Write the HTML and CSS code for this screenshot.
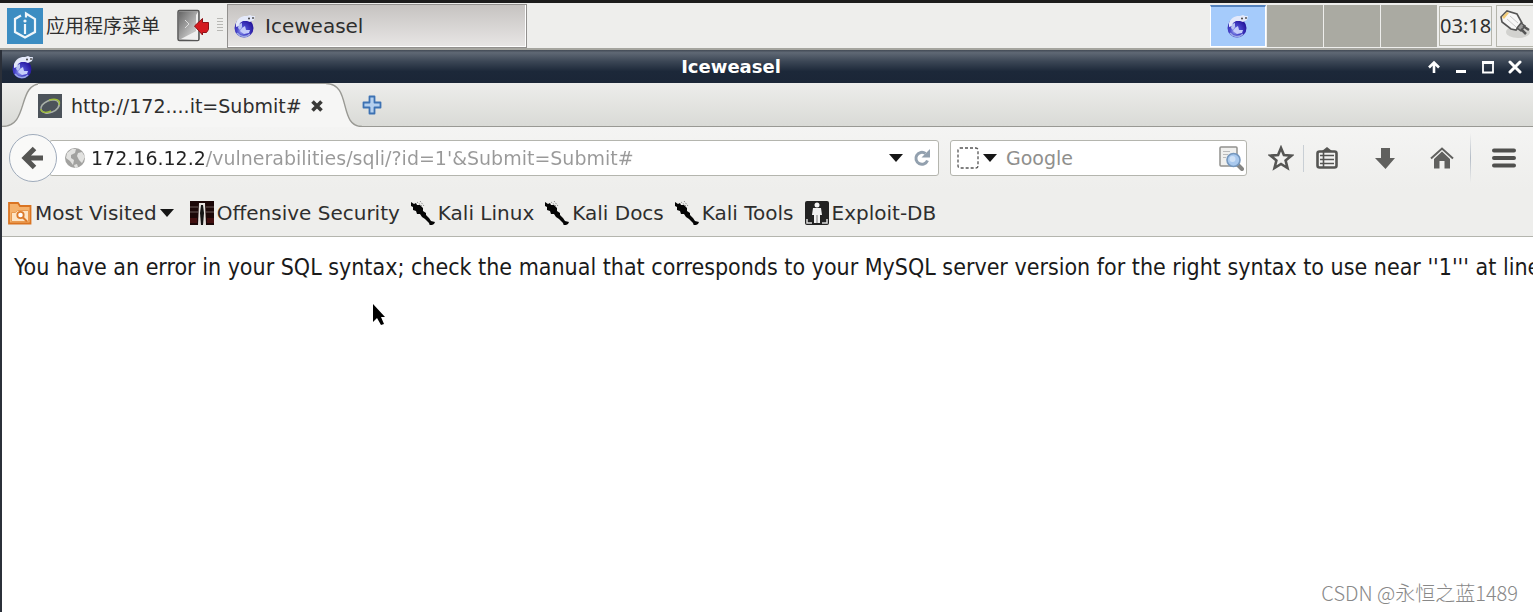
FILE: index.html
```
<!DOCTYPE html>
<html lang="en">
<head>
  <meta charset="UTF-8" />
  <meta name="viewport" content="width=device-width, initial-scale=1.0"/>
  <title>Iceweasel</title>
  <link rel="stylesheet" href="styles.css">
</head>
<body>
  <!-- shared icons -->
  <svg class="defs" width="0" height="0" aria-hidden="true">
    <defs>
      <radialGradient id="globeFill" cx="0.4" cy="0.65" r="0.65">
        <stop offset="0" stop-color="#a9b4f4"/>
        <stop offset="0.4" stop-color="#4a48cc"/>
        <stop offset="1" stop-color="#23129a"/>
      </radialGradient>
      <linearGradient id="doorFill" x1="0" y1="0" x2="1" y2="1">
        <stop offset="0" stop-color="#666"/>
        <stop offset="1" stop-color="#e8e8e8"/>
      </linearGradient>
    </defs>
    <symbol id="weasel" viewBox="0 0 24 24">
      <circle cx="11" cy="14" r="9.500" fill="url(#globeFill)"/>
      <path d="M3 9C5 4 9 1.500 14 2l3-1 2 1 3 0-1 4-4 2-3-1-4 0-3 2-1 3-3 1z" fill="#e4e9fa"/>
      <path d="M6 10l3-1 0 4-2 3-2-2z" fill="#b9c4f2"/>
      <path d="M9 14l3-2 1 4 4 0-1 3-5 1-4-3z" fill="#c5cdfa"/>
      <circle cx="16" cy="4.500" r="1" fill="#444"/>
      <circle cx="20" cy="4" r="1" fill="#555"/>
      <path d="M4 19c3 4 9 5 13 1" fill="none" stroke="#9ba8e4" stroke-width="1.500"/>
    </symbol>
    <symbol id="kali" viewBox="0 0 24 24">
      <path d="M0 1l3 2 2-1 1 2 3 0 3 3 0 3 3 2 0 2 3 3 2 3 4 1-1 2-4 2-1-3-4-4-3-2-2-3-3 0-1-3-3-1 0-3-2-1z" fill="#050505"/>
      <path d="M6 1l5 4M9 0l4 5" stroke="#777" stroke-width="0.800" stroke-dasharray="1.500 1" fill="none"/>
    </symbol>
  </svg>

  <header class="panel">
    <button class="app-menu">
      <svg width="36" height="36" viewBox="0 0 36 36" aria-hidden="true">
        <rect width="36" height="36" fill="#3c8dc2"/>
        <path d="M14 7.500L8 11v13l10 5.500L28 24V11l-9-5.500v4M18 16v10" fill="none" stroke="#f0f6fa" stroke-width="2.200"/>
        <circle cx="18" cy="13" r="1.600" fill="#f0f6fa"/>
      </svg>
      <span>应用程序菜单</span>
    </button>
    <button class="logout" aria-label="Log out">
      <svg width="34" height="34" viewBox="0 0 34 34">
        <rect x="1" y="1.500" width="21" height="30" rx="1.500" fill="#bdbdbd" stroke="#565656" stroke-width="1.500"/>
        <path d="M2 2.500h19l0 17-17 11-2-1z" fill="url(#doorFill)"/>
        <path d="M4 30L19 22V6l2-3v28z" fill="#eee"/>
        <path d="M8 11l4 4-4 4" fill="none" stroke="#ddd"/>
        <path d="M17.500 17l8-7.500v4h6v7l-2 3h-4v2.500z" fill="#d41a1f" stroke="#8f1115"/>
      </svg>
    </button>
    <span class="grip"></span>
    <button class="task"><svg width="24" height="24" aria-hidden="true"><use href="#weasel"/></svg>Iceweasel</button>
    <div class="workspaces">
      <button class="ws active" aria-label="Workspace 1"><svg width="24" height="24"><use href="#weasel"/></svg></button>
      <button class="ws" aria-label="Workspace 2"></button>
      <button class="ws" aria-label="Workspace 3"></button>
      <button class="ws" aria-label="Workspace 4"></button>
    </div>
    <time class="clock">03:18</time>
    <button class="tray" aria-label="Network">
      <svg width="32" height="36" viewBox="0 0 32 36">
        <ellipse cx="19" cy="24" rx="12" ry="6" fill="#d2d2cf"/>
        <path d="M2 9L8 3l10 3 5 9-6 7-5-1L3 14z" fill="#f7f7f7" stroke="#555" stroke-width="1.600"/>
        <path d="M3 9l5-5 2 1-5 6z" fill="#f4cd77"/>
        <path d="M8 11l9 8M11 8l8 7" stroke="#c8c8c8"/>
        <path d="M18 20l4-5 4 3-4 5z" fill="#999" stroke="#555" stroke-width="1.500"/>
        <path d="M24 18l6 4M22 21l5 5" stroke="#555" stroke-width="2.500"/>
      </svg>
    </button>
  </header>

  <div class="window">
    <div class="titlebar">
      <svg width="24" height="24" aria-hidden="true"><use href="#weasel"/></svg>
      <h1>Iceweasel</h1>
      <div class="window-buttons">
        <button aria-label="Shade"><svg width="14" height="14" viewBox="0 0 14 14"><path d="M7 13V3M2 7.500L7 2.500l5 5" fill="none" stroke="#fff" stroke-width="2.600"/></svg></button>
        <button aria-label="Minimize"><svg width="14" height="14" viewBox="0 0 14 14"><path d="M2 11.500h10" stroke="#fff" stroke-width="3"/></svg></button>
        <button aria-label="Maximize"><svg width="14" height="14" viewBox="0 0 14 14"><path d="M1 2.500h12" stroke="#fff" stroke-width="3"/><path d="M2 2v10.500h10V2" fill="none" stroke="#fff" stroke-width="1.800"/></svg></button>
        <button aria-label="Close"><svg width="14" height="14" viewBox="0 0 14 14"><path d="M2 2l10 10M12 2L2 12" stroke="#fff" stroke-width="3" stroke-linecap="round"/></svg></button>
      </div>
    </div>

    <div class="tabs">
      <svg width="40" height="44" viewBox="0 0 40 44" aria-hidden="true">
        <path d="M0 44V43.500C28 43.500 14 0.500 40 0.500V44z" fill="#f6f6f5"/>
        <path d="M0 43.500C28 43.500 14 0.500 40 0.500" fill="none" stroke="#999994" stroke-width="1.400"/>
      </svg>
      <div class="tab">
        <svg width="24" height="24" viewBox="0 0 24 24" aria-hidden="true">
          <rect width="24" height="24" fill="#4c535a"/>
          <ellipse cx="12" cy="12.500" rx="9.500" ry="6" transform="rotate(-22 12 12.500)" fill="none" stroke="#a9b0a8" stroke-width="1.600"/>
          <path d="M11 6c7-2 12 0 10 5M3 15c0 4 6 4 10 2" fill="none" stroke="#a0bd3c" stroke-width="1.400"/>
        </svg>
        <span class="tab-title">http://172....it=Submit#</span>
        <button aria-label="Close tab"><svg width="14" height="14" viewBox="0 0 14 14"><path d="M2.500 2.500l9 9M11.500 2.500l-9 9" stroke="#3a3a38" stroke-width="3.600"/></svg></button>
      </div>
      <svg width="36" height="44" viewBox="0 0 36 44" aria-hidden="true">
        <path d="M36 44V43.500C12 43.500 26 0.500 0 0.500V44z" fill="#f6f6f5"/>
        <path d="M36 43.500C12 43.500 26 0.500 0 0.500" fill="none" stroke="#999994" stroke-width="1.400"/>
      </svg>
      <div class="tab-rest">
        <button aria-label="New tab"><svg width="20" height="20" viewBox="0 0 20 20"><path d="M7.500 1.500h5v6h6v5h-6v6h-5v-6h-6v-5h6z" fill="#b5d0ee" stroke="#3d72b3" stroke-width="1.800" stroke-linejoin="round"/></svg></button>
      </div>
    </div>

    <form class="nav">
      <button type="button" class="back" aria-label="Back">
        <svg width="24" height="24" viewBox="0 0 24 24"><path d="M22 12H5M13.500 2.500L4 12l9.500 9.500" fill="none" stroke="#555553" stroke-width="5"/></svg>
      </button>
      <div class="urlbar">
        <svg width="22" height="22" viewBox="0 0 22 22" aria-hidden="true">
          <circle cx="11" cy="11" r="10" fill="#a2a2a0"/>
          <path d="M3 6l5-4 4 0-1 4-4 2 0 3 3 2-1 5-3-4-4-3zM14 6l4-1 3 5-3 6-3-3-2-4zM10 18l3-1 1 3-3 1z" fill="#e2e2e0"/>
        </svg>
        <input type="text" aria-label="Address" value="172.16.12.2/vulnerabilities/sqli/?id=1'&amp;Submit=Submit#">
        <button type="button" aria-label="History"><svg width="14" height="8" viewBox="0 0 14 8"><path d="M0 0h14L7 8z" fill="#161616"/></svg></button>
        <button type="button" aria-label="Reload"><svg width="18" height="18" viewBox="0 0 18 18"><path d="M14.500 11.500A6 6 0 1 1 12.500 4.500" fill="none" stroke="#92a0ae" stroke-width="3"/><path d="M17 0v8.500H8.500z" fill="#92a0ae"/></svg></button>
      </div>
      <div class="search">
        <button type="button" class="engine" aria-label="Search engine">
          <svg width="22" height="22" viewBox="0 0 22 22"><rect x="1" y="1" width="20" height="20" rx="2" fill="#fff" stroke="#555" stroke-width="1.300" stroke-dasharray="3 2"/></svg>
          <svg width="14" height="8" viewBox="0 0 14 8"><path d="M0 0h14L7 8z" fill="#161616"/></svg>
        </button>
        <input type="text" aria-label="Search" placeholder="Google">
        <button type="button" aria-label="Go">
          <svg width="26" height="26" viewBox="0 0 26 26">
            <rect x="2" y="2" width="17" height="19" rx="1" fill="#f0f0ee" stroke="#91918e" stroke-width="1.500"/>
            <path d="M5 6.500h7M5 9.500h5M5 12.500h3" stroke="#bbb"/>
            <path d="M20 20l4 4" stroke="#858583" stroke-width="4" stroke-linecap="round"/>
            <circle cx="15.500" cy="15" r="6.500" fill="#a9c9ee" stroke="#7597bd" stroke-width="1.600"/>
            <circle cx="14.500" cy="14" r="3" fill="#cfe1f6"/>
          </svg>
        </button>
      </div>
      <button type="button" class="star" aria-label="Bookmark this page"><svg width="26" height="26" viewBox="0 0 26 26"><path d="M13 3l2.900 7.100 7.600.5-5.900 4.900 1.900 7.500L13 19l-6.500 4 1.900-7.500L2.500 10.600l7.600-.5z" fill="none" stroke="#555553" stroke-width="2.600"/></svg></button>
      <span class="sep short"></span>
      <button type="button" class="tool list" aria-label="Bookmarks"><svg width="24" height="24" viewBox="0 0 24 24"><path d="M7 5l5-4 5 4z" fill="#555553"/><rect x="2.500" y="5.500" width="19" height="16" rx="2" fill="#f3f3f2" stroke="#555553" stroke-width="2.600"/><path d="M5 9.500h14M5 13.500h14M5 17.500h14" stroke="#555553" stroke-width="1.600"/><path d="M8.500 6v15" stroke="#555553" stroke-width="1.600"/></svg></button>
      <button type="button" class="tool" aria-label="Downloads"><svg width="24" height="24" viewBox="0 0 24 24"><path d="M8 2h9v10h5L12.500 23 2 12h6z" fill="#60605e"/></svg></button>
      <button type="button" class="tool" aria-label="Home"><svg width="24" height="24" viewBox="0 0 24 24"><path d="M1 12.500L12 2.500l11 10" fill="none" stroke="#60605e" stroke-width="2"/><path d="M4 13l8-7.500 8 7.500v9.500h-5.500V15h-5v7.500H4z" fill="#60605e"/></svg></button>
      <span class="sep"></span>
      <button type="button" class="menu" aria-label="Menu"><svg width="24" height="20" viewBox="0 0 24 20"><path d="M2 2.500h20M2 10h20M2 17.500h20" stroke="#50504e" stroke-width="4" stroke-linecap="round"/></svg></button>
    </form>

    <nav class="bookmarks">
      <a href="#" class="most">
        <svg width="24" height="24" viewBox="0 0 24 24" aria-hidden="true">
          <path d="M1 22.500V2h9l2 3h10.500v17.500z" fill="#f5b26c" stroke="#da7422" stroke-width="1.800"/>
          <path d="M3.500 20.500v-9h4l2-2h11v11z" fill="#fde4c4" stroke="#e99a50"/>
          <circle cx="12.500" cy="14" r="3.200" fill="#fff" stroke="#dc7b2c" stroke-width="1.800"/>
          <path d="M15 16.500l4 4" stroke="#dc7b2c" stroke-width="2"/>
        </svg>
        Most Visited
        <svg width="14" height="8" viewBox="0 0 14 8" aria-hidden="true"><path d="M0 0h14L7 8z" fill="#161616"/></svg>
      </a>
      <a href="#">
        <svg width="24" height="24" viewBox="0 0 24 24" aria-hidden="true">
          <rect width="24" height="24" fill="#1c0808"/>
          <path d="M0 6h8M0 11h8M16 6h8M16 11h8" stroke="#6a5a58"/>
          <path d="M0 17h7v5H0zM17 17h7v5h-7z" fill="#431010"/>
          <path d="M9 2h6l1 22H8z" fill="#e6e2df"/>
          <path d="M11 4h2l1 8-1 12h-2l-1-12z" fill="#151515"/>
        </svg>
        Offensive Security
      </a>
      <a href="#"><svg width="24" height="24" aria-hidden="true"><use href="#kali"/></svg>Kali Linux</a>
      <a href="#"><svg width="24" height="24" aria-hidden="true"><use href="#kali"/></svg>Kali Docs</a>
      <a href="#"><svg width="24" height="24" aria-hidden="true"><use href="#kali"/></svg>Kali Tools</a>
      <a href="#">
        <svg width="24" height="24" viewBox="0 0 24 24" aria-hidden="true">
          <rect width="24" height="24" rx="2" fill="#222"/>
          <circle cx="12" cy="4" r="2.500" fill="#f5f5f5"/>
          <path d="M8 7h8l1 7h-2v8H9v-8H7z" fill="#f0f0f0"/>
          <path d="M12 14v8" stroke="#777"/>
          <path d="M2 18v4h5M22 18v4h-5" fill="none" stroke="#ddd" stroke-width="1.500"/>
        </svg>
        Exploit-DB
      </a>
    </nav>

    <main class="page">
      <p>You have an error in your SQL syntax; check the manual that corresponds to your MySQL server version for the right syntax to use near ''1''' at line 1</p>
    </main>
  </div>

  <svg class="cursor" width="14" height="24" viewBox="0 0 14 24" aria-hidden="true"><path d="M1 1v18l4-4 4 7 3-1-3-7h4z" fill="#000"/></svg>
  <div class="watermark">CSDN @永恒之蓝1489</div>
</body>
</html>
```

FILE: styles.css
```
:root {
  --bg: #eeeeec;
  --text: #2e2e2e;
  --line: #b4b5ae;
}

* {
  box-sizing: border-box;
}

body {
  margin: 0;
  min-height: 100vh;
  display: flex;
  flex-direction: column;
  position: relative;
  overflow: hidden;
  border-top: 3px solid #1c1c1c;
  background: white;
  color: var(--text);
  font-family: "DejaVu Sans", "Noto Sans CJK SC", sans-serif;
  font-size: 20px;
  line-height: 24px;
}

button,
input {
  font: inherit;
  color: inherit;
  border: none;
  background: none;
  padding: 0;
  margin: 0;
}

button {
  display: flex;
  align-items: center;
  justify-content: center;
  flex-shrink: 0;
}

input {
  outline: none;
  min-width: 0;
  flex: 1;
}

svg {
  display: block;
  flex-shrink: 0;
}

.defs {
  position: absolute;
}

/* desktop panel */
.panel {
  display: flex;
  align-items: center;
  height: 47px;
  padding-left: 7px;
  background: var(--bg);
  border-bottom: 2px solid #a5a59f;
  overflow: hidden;
}

.app-menu {
  gap: 3px;
  font-size: 19px;
}

.logout {
  margin-left: 17px;
}

.grip {
  width: 6px;
  height: 15px;
  margin: 0 4px 0 6px;
  background: repeating-linear-gradient(#b8b8b4 0 1px, transparent 1px 3px);
}

.task {
  width: 300px;
  height: 44px;
  justify-content: flex-start;
  gap: 8px;
  padding-left: 5px;
  border: 1px solid #92908e;
  box-shadow: inset -1px -1px 0 #fff;
  background: linear-gradient(#c6c3c1, #e8e6e5);
}

.workspaces {
  display: flex;
  gap: 1px;
  margin-left: auto;
}

.ws {
  width: 56px;
  height: 42px;
  background: #aaaaa2;
}

.ws.active {
  background: #a5cbfb;
  border: 1px solid white;
  border-top: 2px solid #5482bd;
}

.clock {
  width: 53px;
  height: 40px;
  margin: 0 4px 0 2px;
  border: 1px solid #b5b5ab;
  font-family: "Noto Sans", sans-serif;
  line-height: 38px;
  text-align: center;
}

.tray {
  width: 37px;
  height: 42px;
  border: 1px solid #b5b5ab;
  border-right: none;
}

/* browser window */
.window {
  flex: 1;
  display: flex;
  flex-direction: column;
  border-left: 2px solid #2b3039;
}

.titlebar {
  display: flex;
  align-items: center;
  height: 33px;
  padding: 0 11px 0 9px;
  background: linear-gradient(#424a55, #5f6874 8%, #3b4655 35%, #1c2839 65%, #1b2637);
  color: white;
}

.titlebar h1 {
  flex: 1;
  margin: 0;
  font-size: 18px;
  text-align: center;
}

.window-buttons {
  display: flex;
  gap: 13px;
}

.tabs {
  display: flex;
  height: 44px;
  background: linear-gradient(#ededeb, #d9dad6);
}

.tab {
  display: flex;
  align-items: center;
  width: 288px;
  margin-left: -4px;
  border-top: 1px solid #999994;
  background: #f6f6f5;
  font-size: 19px;
}

.tab-title {
  margin: 0 8px 0 9px;
}

.tab-rest {
  flex: 1;
  display: flex;
  border-bottom: 1px solid #999994;
}

.nav {
  display: flex;
  align-items: center;
  height: 62px;
  padding-left: 7px;
  background: linear-gradient(#f4f4f3, #eeeeec);
}

.back {
  position: relative;
  z-index: 1;
  width: 48px;
  height: 48px;
  border: 1px solid #9fabbb;
  border-radius: 50%;
  background: #f9f9f8;
}

.urlbar,
.search {
  display: flex;
  align-items: center;
  height: 36px;
  border: 1px solid var(--line);
  border-radius: 3px;
  background: white;
  font-size: 19px;
}

.urlbar {
  flex: 1;
  gap: 5px;
  margin-left: -8px;
  padding: 0 7px 0 14px;
}

.urlbar button {
  margin-left: 5px;
}

/* host part dark, path part grey */
.urlbar input {
  background: linear-gradient(90deg, #222 115px, #999 115px);
  -webkit-background-clip: text;
  background-clip: text;
  color: transparent;
}

.search {
  width: 297px;
  margin-left: 11px;
  padding: 0 2px 0 6px;
}

.engine {
  gap: 4px;
  margin-right: 9px;
}

.search input::placeholder {
  color: #8f8f8d;
  opacity: 1;
}

.star {
  width: 56px;
  padding-left: 11px;
}

.sep {
  width: 1px;
  height: 50px;
  background: linear-gradient(transparent, #b4bcc6, transparent);
}

.sep.short {
  height: 27px;
  background: #c9cfd5;
}

.tool {
  width: 57px;
}

.list {
  width: 52px;
  padding-right: 6px;
}

.menu {
  width: 62px;
  padding-left: 4px;
}

.bookmarks {
  display: flex;
  align-items: center;
  gap: 11px;
  height: 48px;
  padding-left: 6px;
  background: var(--bg);
  border-bottom: 1px solid var(--line);
}

.bookmarks a {
  display: flex;
  align-items: center;
  gap: 3px;
  color: var(--text);
  text-decoration: none;
  white-space: nowrap;
}

.bookmarks .most {
  margin-right: 5px;
}

.page {
  flex: 1;
  padding: 14px 12px;
  overflow: hidden;
  background: white;
  color: #1a1a1a;
  font-family: "DejaVu Sans Condensed", "Noto Sans", sans-serif;
  font-size: 23px;
  line-height: 32px;
}

.page p {
  margin: 0;
  white-space: nowrap;
}

/* overlays */
.cursor {
  position: absolute;
  left: 372px;
  top: 300px;
}

.watermark {
  position: absolute;
  right: 15px;
  bottom: 7px;
  color: #888;
  font-family: "Noto Sans CJK SC", sans-serif;
  font-weight: 300;
}
```
